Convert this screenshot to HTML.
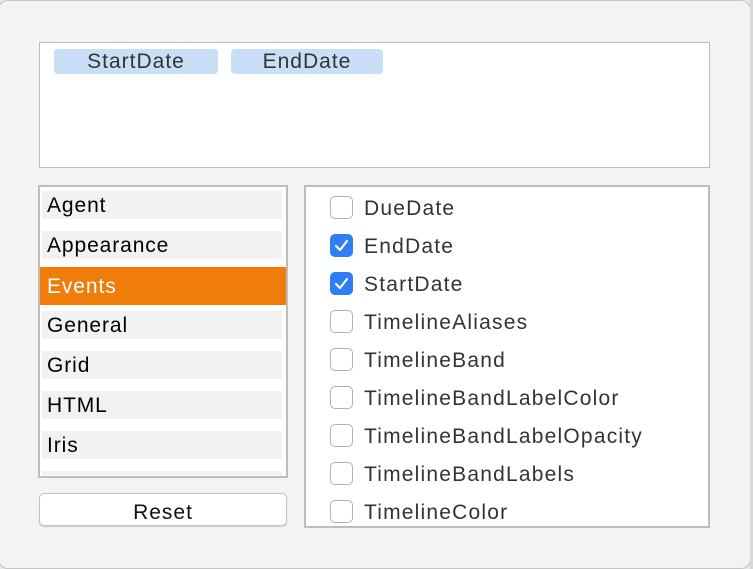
<!DOCTYPE html>
<html><head><style>
*{margin:0;padding:0;box-sizing:border-box}
body{width:753px;height:569px;overflow:hidden;background:#e9e9e9;font-family:"Liberation Sans",sans-serif;position:relative}
.win{position:absolute;left:-2px;top:0;width:753px;height:569px;background:#f3f3f3;border:1px solid #c4c4c4;border-radius:10px}
.abs{position:absolute}
.box{position:absolute;background:#fff;border:2px solid #bdbdbd}
.tag{position:absolute;top:49px;height:25px;background:#c9dff8;border-radius:4px;color:#333;font-size:21px;letter-spacing:1px;line-height:25px;text-align:center}
.row{position:absolute;left:42px;width:240px;height:28px;background:#f2f2f2;font-size:21px;letter-spacing:0.9px;line-height:30px;padding-left:5px;color:#000}
.cb{position:absolute;left:330px;width:23px;height:23px;border:1px solid #b3b3b3;border-radius:5px;background:#fff}
.cb.on{background:#2f7ef6;border-color:#2f7ef6}
.lbl{position:absolute;left:364px;font-size:21px;letter-spacing:1.2px;color:#333;line-height:26px}
</style></head><body>
<div class="win"></div>
<div class="abs" style="left:750px;top:0;width:3px;height:569px;background:#d8d8d8"></div>
<div class="box" style="left:39px;top:42px;width:671px;height:126px;border-width:1px"></div>
<div class="tag" style="left:54px;width:164px">StartDate</div>
<div class="tag" style="left:231px;width:152px">EndDate</div>

<div class="box" style="left:38px;top:185px;width:250px;height:293px"></div>
<div class="row" style="top:191px">Agent</div>
<div class="row" style="top:231px">Appearance</div>
<div class="row" style="top:267px;left:40px;width:246px;height:38px;line-height:40px;padding-left:7px;background:#f07c0a;color:#fff">Events</div>
<div class="row" style="top:311px">General</div>
<div class="row" style="top:351px">Grid</div>
<div class="row" style="top:391px">HTML</div>
<div class="row" style="top:431px">Iris</div>
<div class="row" style="top:471px;height:4px"></div>

<div class="abs" style="left:39px;top:493px;width:248px;height:33px;background:#fff;border:1px solid #c2c2c2;border-radius:5px;box-shadow:0 1px 1px rgba(0,0,0,.15);font-size:21px;letter-spacing:1px;text-align:center;line-height:37px;color:#111">Reset</div>

<div class="box" style="left:304px;top:185px;width:406px;height:343px"></div>
<div class="cb" style="top:196px"></div><div class="lbl" style="top:196px">DueDate</div>
<div class="cb on" style="top:234px"><svg width="21" height="21" viewBox="0 0 21 21"><path d="M5 11l4 4 7-9" stroke="#fff" stroke-width="2.2" fill="none" stroke-linecap="round" stroke-linejoin="round"/></svg></div><div class="lbl" style="top:234px">EndDate</div>
<div class="cb on" style="top:272px"><svg width="21" height="21" viewBox="0 0 21 21"><path d="M5 11l4 4 7-9" stroke="#fff" stroke-width="2.2" fill="none" stroke-linecap="round" stroke-linejoin="round"/></svg></div><div class="lbl" style="top:272px">StartDate</div>
<div class="cb" style="top:310px"></div><div class="lbl" style="top:310px">TimelineAliases</div>
<div class="cb" style="top:348px"></div><div class="lbl" style="top:348px">TimelineBand</div>
<div class="cb" style="top:386px"></div><div class="lbl" style="top:386px">TimelineBandLabelColor</div>
<div class="cb" style="top:424px"></div><div class="lbl" style="top:424px">TimelineBandLabelOpacity</div>
<div class="cb" style="top:462px"></div><div class="lbl" style="top:462px">TimelineBandLabels</div>
<div class="cb" style="top:500px"></div><div class="lbl" style="top:500px">TimelineColor</div>
</body></html>
